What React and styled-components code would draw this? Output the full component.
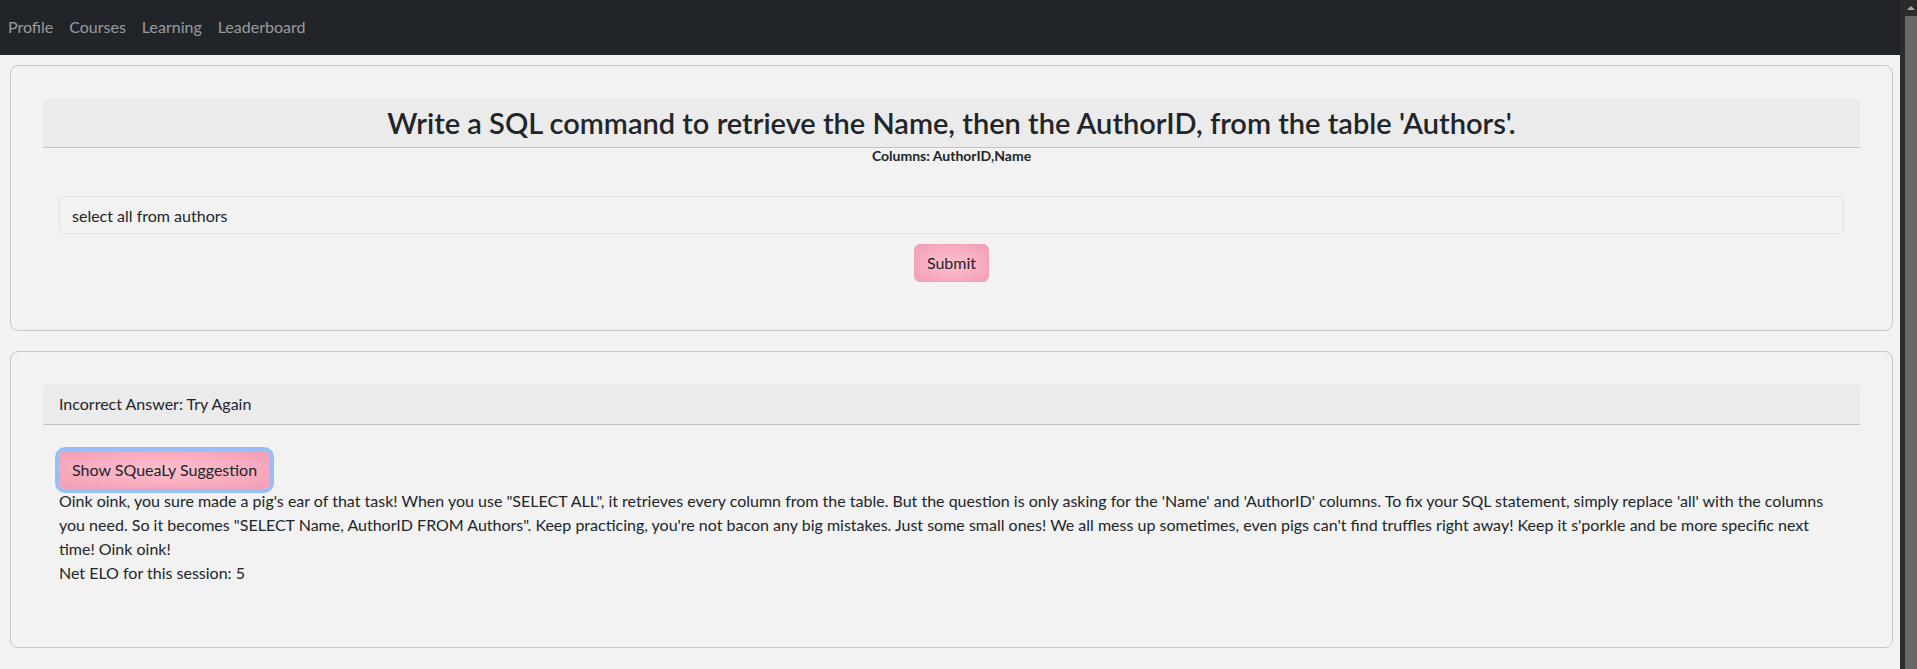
import React from "react";
import styled, { createGlobalStyle } from "styled-components";

const GlobalStyle = createGlobalStyle`
  html, body {
    margin: 0;
    padding: 0;
    height: 100%;
    overflow: hidden;
    background: #f2f2f2;
  }
  body {
    font-family: "Lato", "Noto Sans", "Liberation Sans", sans-serif;
    font-size: 16px;
    line-height: 1.5;
    color: #212529;
  }
  * { box-sizing: border-box; }
`;

const Shell = styled.div`
  display: flex;
  height: 100vh;
  width: 100vw;
`;

const Page = styled.div`
  flex: 1;
  min-width: 0;
  display: flex;
  flex-direction: column;
`;

const Navbar = styled.nav`
  height: 55px;
  background: #212529;
  display: flex;
  align-items: center;
  padding-bottom: 1px;
`;

const NavLink = styled.a`
  color: rgba(255, 255, 255, 0.55);
  text-decoration: none;
  padding: 0 8px;
  font-size: 16px;
  line-height: 24px;
`;

const Main = styled.main`
  padding: 10px 7px 0 10px;
  display: flex;
  flex-direction: column;
  gap: 20px;
`;

const Card = styled.section`
  border: 1px solid #c7c7c7;
  border-radius: 8px;
  padding: 32px;
  background: #f2f2f2;
`;

const CardHeader = styled.div`
  background: #ebebeb;
  border-bottom: 1px solid #c4c4c4;
  border-radius: 6px 6px 0 0;
  padding: 8px 16px;
  text-align: ${(p) => (p.$center ? "center" : "left")};
`;

const Title = styled.h3`
  margin: 0;
  font-size: 29px;
  font-weight: 600;
  line-height: 33px;
  color: #212529;
`;

const ColumnsNote = styled.div`
  text-align: center;
  font-weight: 700;
  font-size: 14px;
  line-height: 16px;
`;

const CardBody = styled.div`
  padding: 16px;
`;

const Form = styled.form`
  margin-top: 16px;
  display: flex;
  flex-direction: column;
  align-items: center;
  gap: 10px;
`;

const TextInput = styled.input`
  width: 100%;
  height: 38px;
  padding: 6px 12px;
  border: 1px solid #dee2e6;
  border-radius: 6px;
  background: #f2f2f2;
  color: #212529;
  font-family: inherit;
  font-size: 16px;
  line-height: 24px;
  outline: none;
`;

const PinkButton = styled.button`
  height: 38px;
  padding: 6px 12px;
  font-family: inherit;
  font-size: 16px;
  line-height: 24px;
  color: #212529;
  border: 1px solid #eea3b6;
  border-radius: 6px;
  background: radial-gradient(ellipse at center, #ffc0cd 0%, #fbb1c3 45%, #f19db3 100%);
  cursor: pointer;
  box-shadow: ${(p) => (p.$focused ? "0 0 0 4px #98bef8" : "none")};
`;

const ResultContent = styled.div`
  margin-top: 10px;
  display: flex;
  flex-direction: column;
  align-items: flex-start;
`;

const Feedback = styled.p`
  margin: 0 0 14px;
  line-height: 24px;
`;

const Scrollbar = styled.div`
  width: 17px;
  flex: none;
  background: #2b2b2b;
  display: flex;
  flex-direction: column;
`;

const ScrollArrow = styled.div`
  height: 16px;
  display: flex;
  align-items: center;
  justify-content: center;
  padding-left: 4px;
  &::before {
    content: "";
    width: 0;
    height: 0;
    border-left: 4px solid transparent;
    border-right: 4px solid transparent;
    border-bottom: 4px solid #a8a8a8;
  }
`;

const ScrollThumb = styled.div`
  flex: 1;
  margin-left: 5px;
  background: #686868;
`;

export default function App() {
  return (
    <>
      <GlobalStyle />
      <Shell>
        <Page>
          <Navbar>
            <NavLink href="#">Profile</NavLink>
            <NavLink href="#">Courses</NavLink>
            <NavLink href="#">Learning</NavLink>
            <NavLink href="#">Leaderboard</NavLink>
          </Navbar>
          <Main>
            <Card>
              <CardHeader $center>
                <Title>
                  Write a SQL command to retrieve the Name, then the AuthorID, from the table 'Authors'.
                </Title>
              </CardHeader>
              <ColumnsNote>Columns: AuthorID,Name</ColumnsNote>
              <CardBody>
                <Form onSubmit={(e) => e.preventDefault()}>
                  <TextInput type="text" defaultValue="select all from authors" />
                  <PinkButton type="submit">Submit</PinkButton>
                </Form>
              </CardBody>
            </Card>
            <Card>
              <CardHeader>Incorrect Answer: Try Again</CardHeader>
              <CardBody>
                <ResultContent>
                  <PinkButton type="button" $focused>
                    Show SQueaLy Suggestion
                  </PinkButton>
                  <Feedback>
                    Oink oink, you sure made a pig's ear of that task! When you use "SELECT ALL", it retrieves every
                    column from the table. But the question is only asking for the 'Name' and 'AuthorID' columns. To
                    fix your SQL statement, simply replace 'all' with the columns you need. So it becomes "SELECT
                    Name, AuthorID FROM Authors". Keep practicing, you're not bacon any big mistakes. Just some small
                    ones! We all mess up sometimes, even pigs can't find truffles right away! Keep it s'porkle and be
                    more specific next time! Oink oink!
                    <br />
                    Net ELO for this session: 5
                  </Feedback>
                </ResultContent>
              </CardBody>
            </Card>
          </Main>
        </Page>
        <Scrollbar>
          <ScrollArrow />
          <ScrollThumb />
        </Scrollbar>
      </Shell>
    </>
  );
}
